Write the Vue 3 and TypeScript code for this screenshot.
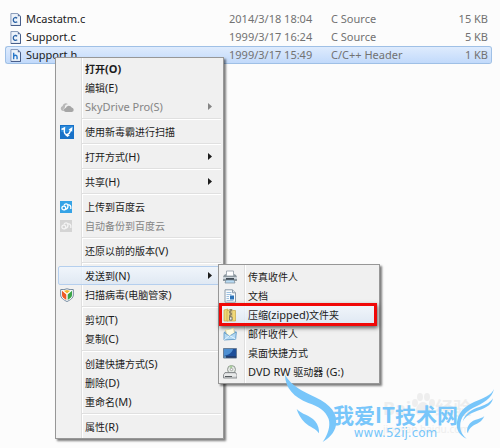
<script setup lang="ts">
interface FileRow {
  name: string
  date: string
  type: string
  size: string
  glyph: string
  selected?: boolean
}

interface MenuEntry {
  text: string
  icon?: string
  disabled?: boolean
  bold?: boolean
  arrow?: boolean
  open?: boolean
}

interface Run {
  text: string
  latin: boolean
}

const files: FileRow[] = [
  { name: 'Mcastatm.c', date: '2014/3/18 18:04', type: 'C Source', size: '15 KB', glyph: 'C' },
  { name: 'Support.c', date: '1999/3/17 16:24', type: 'C Source', size: '5 KB', glyph: 'C' },
  { name: 'Support.h', date: '1999/3/17 15:49', type: 'C/C++ Header', size: '1 KB', glyph: 'h', selected: true },
]

const groups: MenuEntry[][] = [
  [
    { text: '打开(O)', bold: true },
    { text: '编辑(E)' },
    { text: 'SkyDrive Pro(S)', icon: 'cloud', disabled: true, arrow: true },
  ],
  [{ text: '使用新毒霸进行扫描', icon: 'duba' }],
  [{ text: '打开方式(H)', arrow: true }],
  [{ text: '共享(H)', arrow: true }],
  [
    { text: '上传到百度云', icon: 'pan' },
    { text: '自动备份到百度云', icon: 'panoff', disabled: true },
  ],
  [{ text: '还原以前的版本(V)' }],
  [
    { text: '发送到(N)', arrow: true, open: true },
    { text: '扫描病毒(电脑管家)', icon: 'shield' },
  ],
  [{ text: '剪切(T)' }, { text: '复制(C)' }],
  [{ text: '创建快捷方式(S)' }, { text: '删除(D)' }, { text: '重命名(M)' }],
  [{ text: '属性(R)' }],
]

const sendTo: MenuEntry[] = [
  { text: '传真收件人', icon: 'fax' },
  { text: '文档', icon: 'doc' },
  { text: '压缩(zipped)文件夹', icon: 'zip', open: true },
  { text: '邮件收件人', icon: 'mail' },
  { text: '桌面快捷方式', icon: 'desktop' },
  { text: 'DVD RW 驱动器 (G:)', icon: 'dvd' },
]

// Latin runs are set one size up from the Chinese ones.
function runs(text: string): Run[] {
  return (text.match(/[\x20-\x7e]+|[^\x20-\x7e]+/g) ?? []).map((part) => ({
    text: part,
    latin: /^[\x20-\x7e]/.test(part),
  }))
}
</script>

<template>
  <main class="window">
    <table class="files">
      <tbody>
        <tr v-for="file in files" :key="file.name" :class="{ selected: file.selected }">
          <td class="name">
            <span class="file">
              <svg class="file-icon" viewBox="0 0 12 14" aria-hidden="true">
                <path d="M1 .5h7.500L11.500 3.500v10H1z" fill="#edf3fa" stroke="#7f93b4" />
                <path d="M11.500 3.500v10H1" fill="none" stroke="#3e5583" />
                <path d="M8.500.5v3h3z" fill="#5c719c" />
                <path v-if="file.glyph === 'C'" d="M7.800 5.600C5.800 4 3.600 5.200 3.600 7.500S5.800 11 7.900 9.500" fill="none" stroke="#2d64a6" stroke-width="1.500" />
                <path v-else d="M4 4v7M4 8C5 6.300 7.700 6.300 7.700 8.500V11" fill="none" stroke="#2978ca" stroke-width="1.500" />
              </svg>
              {{ file.name }}
            </span>
          </td>
          <td class="date">{{ file.date }}</td>
          <td class="type">{{ file.type }}</td>
          <td class="size">{{ file.size }}</td>
        </tr>
      </tbody>
    </table>

    <div class="menu context" role="menu">
      <div v-for="(group, g) in groups" :key="g" class="group" role="group">
        <div v-for="entry in group" :key="entry.text" class="slot">
          <button
            type="button"
            role="menuitem"
            class="item"
            :class="{ bold: entry.bold, active: entry.open }"
            :disabled="entry.disabled"
          >
            <span class="icon">
              <svg v-if="entry.icon === 'cloud'" viewBox="0 0 14 14" aria-hidden="true">
                <path d="M3 11a2.500 2.500 0 0 1-.4-4.900A3.200 3.200 0 0 1 8 4.200 3 3 0 0 0 5 7.500C3.500 8 3.200 10 4.200 11z" fill="#b8b8b8" />
                <path d="M6 12a2 2 0 0 1-.2-4A3.200 3.200 0 0 1 11.700 7.500a2.300 2.300 0 0 1 .3 4.500z" fill="#a6a6a6" />
              </svg>
              <svg v-else-if="entry.icon === 'duba'" viewBox="0 0 14 14" aria-hidden="true">
                <path d="M0 0h14v14H0z" fill="#1871c7" />
                <path d="M1 1h12v6H1z" fill="#2b8adb" />
                <path d="M1.500 4.500l3-1.500-.2 3.500C4.500 11 9.500 10.500 10.500 5" fill="none" stroke="#fff" stroke-width="1.400" />
                <path d="M8.500 4.500L12.500 2l-.5 4.500zM5 10l2.500 2L10 10z" fill="#fff" />
              </svg>
              <svg v-else-if="entry.icon === 'pan' || entry.icon === 'panoff'" viewBox="0 0 14 14" aria-hidden="true">
                <path d="M0 1h12v12H0z" :fill="entry.icon === 'pan' ? '#35a3e6' : '#d4d4d4'" />
                <g fill="none" :stroke="entry.icon === 'pan' ? '#fff' : '#f4f4f4'" stroke-width="1.300">
                  <circle cx="3.800" cy="8" r="1.900" />
                  <path d="M4 5.500C5 3 8 3.500 8 6S7 9 5.500 9.300M8 5c2-.5 3.200 1 2.800 4" />
                </g>
              </svg>
              <svg v-else-if="entry.icon === 'shield'" viewBox="0 0 14 14" aria-hidden="true">
                <path d="M.7 1.500Q4 2 7 .8q3 1.200 6.300.7V7c0 3-3 5-6.300 6.500C3.700 12 .7 10 .7 7z" fill="#fff" stroke="#71889e" />
                <path d="M2 2.700L6.300 6.500V12C3.800 10.500 2 9 2 7z" fill="#ee5a26" />
                <path d="M12 2.700L7.700 6.500V12C10.200 10.500 12 9 12 7z" fill="#3aa448" />
                <path d="M3.800 2.700Q5.500 2.500 7 2q1.500.5 3.200.7L7 5.500z" fill="#f5b52a" />
              </svg>
            </span>
            <span class="label">
              <span v-for="(run, r) in runs(entry.text)" :key="r" :class="{ latin: run.latin }">{{ run.text }}</span>
            </span>
            <svg v-if="entry.arrow" class="arrow" viewBox="0 0 4 7" aria-hidden="true"><path d="M0 0l4 3.500L0 7z" fill="currentColor" /></svg>
          </button>

          <div v-if="entry.open" class="menu submenu" role="menu">
            <button
              v-for="target in sendTo"
              :key="target.text"
              type="button"
              role="menuitem"
              class="item"
              :class="{ active: target.open, marked: target.open }"
            >
              <span class="icon">
                <svg v-if="target.icon === 'fax'" viewBox="0 0 14 14" aria-hidden="true">
                  <path d="M3.500 1h7v5h-7z" fill="#fff" stroke="#8f9ba5" stroke-width=".8" />
                  <path d="M1 5l2-1v2h8V4l2 1 1 2v4H0V7z" fill="#8d989f" />
                  <path d="M0 7h14v2H0z" fill="#cdd5db" />
                  <path d="M3 8h8v2H3z" fill="#414c55" />
                  <path d="M3 10h8l1 3H2z" fill="#b9dcf5" stroke="#788692" stroke-width=".7" />
                </svg>
                <svg v-else-if="target.icon === 'doc'" viewBox="0 0 14 14" aria-hidden="true">
                  <path d="M2 .8h7.500l3 3v9.400H2z" fill="#f8fbfd" stroke="#8c9aa8" />
                  <path d="M9.500.8v3h3" fill="#d9e2ea" stroke="#8c9aa8" />
                  <path d="M3.500 3.500h5M3.500 5.500h5M3.500 7.500h2.500M3.500 9.500h2.500M3.500 11.500h7" stroke="#9dc0df" />
                  <path d="M7 6.500h4v4H7z" fill="#2b72b8" />
                </svg>
                <svg v-else-if="target.icon === 'zip'" viewBox="0 0 14 14" aria-hidden="true">
                  <path d="M1 2l4-1v12H1z" fill="#efd676" stroke="#c9a742" stroke-width=".7" />
                  <path d="M4 2.500h8.500v10.500H4z" fill="#f1d978" stroke="#c7a645" stroke-width=".7" />
                  <path d="M6 1h3.500v12H6z" fill="#c9b67b" />
                  <path d="M7 2h2M6 4h2M7 6h2M6 8h2" stroke="#5f5b50" />
                  <path d="M6.500 9h2.500v3H6.500z" fill="#eee" stroke="#66665e" stroke-width=".8" />
                </svg>
                <svg v-else-if="target.icon === 'mail'" viewBox="0 0 14 14" aria-hidden="true">
                  <path d="M1 5L7.500.8 13.500 5 12.500 12 1 13z" fill="#7db4df" />
                  <path d="M2.500 3l8-1.500L12 8l-8 1z" fill="#fffbe2" stroke="#e2cb84" stroke-width=".7" />
                  <path d="M1 5.500L6.500 9l6.800-4-.6 7.300L1 13z" fill="#b3d9f3" stroke="#5c94c2" stroke-width=".8" />
                  <path d="M1.300 12.700L6.500 8.500l6 3.500" fill="none" stroke="#e6f5ff" />
                </svg>
                <svg v-else-if="target.icon === 'desktop'" viewBox="0 0 14 14" aria-hidden="true">
                  <path d="M.5 2.500h13v9.500H.5z" fill="#1e4f99" stroke="#687d96" />
                  <path d="M1 3h9C9 7 5 9 1 10z" fill="#4d8fd2" />
                  <path d="M1 10.500h12v1H1z" fill="#22314b" />
                  <path d="M1 10.500h2v1H1z" fill="#8bd0f0" />
                </svg>
                <svg v-else viewBox="0 0 14 14" aria-hidden="true">
                  <circle cx="8.500" cy="4.500" r="4" fill="#e3e8e3" stroke="#8e9690" />
                  <path d="M8.500 4.500L6 1.200A4 4 0 0 1 9.500.6z" fill="#a9ce9c" />
                  <circle cx="8.500" cy="4.500" r="1.200" fill="#fff" stroke="#888" stroke-width=".7" />
                  <path d="M2 7.500h10.500L14 10v3H.5v-3z" fill="#d8dadb" stroke="#777b7e" stroke-width=".8" />
                  <path d="M1 10h12.500" stroke="#fff" stroke-width=".8" />
                  <path d="M2 11.500h7" stroke="#575b5e" />
                </svg>
              </span>
              <span class="label">
                <span v-for="(run, r) in runs(target.text)" :key="r" :class="{ latin: run.latin }">{{ run.text }}</span>
              </span>
            </button>
          </div>
        </div>
      </div>
    </div>

    <aside class="watermark">
      <div class="baidu">
        <span class="baidu-name">Bai<svg viewBox="0 0 24 22" aria-hidden="true">
          <g fill="currentColor"><ellipse cx="4" cy="10" rx="3" ry="4" /><ellipse cx="9" cy="4" rx="3" ry="4" /><ellipse cx="16" cy="4" rx="3" ry="4" /><ellipse cx="21" cy="10" rx="3" ry="4" /><path d="M12 9c4 0 8 6 7 10s-4 2-7 2-6 2-7-2 3-10 7-10z" /></g>
        </svg>经验</span>
        <span class="baidu-host">jingyan.baidu.com</span>
      </div>
      <svg class="wings" viewBox="0 0 690 234" aria-hidden="true">
        <g fill="#78c6fa">
          <path d="M45 15C64 48 98 63 136 82C182 104 204 130 198 166C193 190 176 206 158 216C174 194 182 168 176 147C166 120 145 110 115 99C72 82 46 55 45 15Z" />
          <path d="M80 117C95 133 120 136 135 153C145 165 148 178 147 190C138 175 120 172 105 158C92 146 84 130 80 117Z" />
          <path d="M672 57C665 87 640 99 610 113C580 128 566 150 572 180C575 192 582 200 590 206C565 195 556 175 562 150C568 120 595 103 625 91C650 81 665 72 672 57Z" />
          <path d="M669 85C665 108 640 117 615 125C595 132 582 144 578 156C583 130 605 118 630 110C650 104 660 97 669 85Z" />
          <path d="M643 138C635 158 620 160 608 168C598 175 596 182 592 190C588 170 600 156 615 150C630 146 638 143 643 138Z" />
        </g>
      </svg>
      <div class="brand">
        <strong>我爱IT技术网</strong>
        <a href="http://www.52ij.com">www.52ij.com</a>
      </div>
    </aside>
  </main>
</template>

<style>
body {
  margin: 0;
  background: #fcfcfc;
}
</style>

<style scoped>
.window {
  position: relative;
  box-sizing: border-box;
  min-height: 100vh;
  padding: 10px 8px 0 5px;
  overflow: hidden;
  font-family: "Noto Sans", "Noto Sans CJK SC", sans-serif;
  font-size: 11px;
  color: #1c1c1c;
}

.files {
  width: 100%;
  table-layout: fixed;
  border-collapse: separate;
  border-spacing: 0;
}

.files td {
  height: 16px;
  padding: 0;
  border: solid transparent;
  border-width: 1px 0;
  line-height: 16px;
  white-space: nowrap;
  color: #727272;
}

.files .name {
  width: 223px;
  border-left-width: 1px;
  color: #222;
}

.files .date {
  width: 102px;
}

.files .size {
  width: 60px;
  padding-right: 3px;
  border-right-width: 1px;
  text-align: right;
}

.files .selected td {
  border-color: #9fc0e6;
  background: linear-gradient(#deebfd, #c2dafb) padding-box;
}

.files .selected .name {
  border-radius: 3px 0 0 3px;
}

.files .selected .size {
  border-radius: 0 3px 3px 0;
}

.file {
  display: flex;
  align-items: center;
  gap: 5px;
  padding-left: 4px;
}

.file-icon {
  width: 11px;
  height: 13px;
}

.menu {
  position: absolute;
  box-sizing: border-box;
  border: 1px solid #979797;
  background: linear-gradient(90deg, #f1f1f1 25px, #dfdfdf 25px, #dfdfdf 26px, #fff 26px, #fff 27px, #f0f0f0 27px);
  box-shadow: 2px 2px 2px rgba(0, 0, 0, 0.5);
}

.context {
  top: 57px;
  left: 55px;
  width: 169px;
  padding: 1px 2px 2px;
}

.submenu {
  top: -2px;
  left: 160px;
  z-index: 1;
  width: 162px;
  padding: 2px;
}

.group + .group::before {
  content: "";
  display: block;
  height: 1px;
  margin: 2px 0 2px 24px;
  border-top: 1px solid #e0e0e0;
  background: #fff;
}

.slot {
  position: relative;
}

.item {
  display: flex;
  align-items: center;
  box-sizing: border-box;
  width: 100%;
  height: 19px;
  margin: 0;
  padding: 0 8px 0 1px;
  border: 1px solid transparent;
  border-radius: 2px;
  background: none;
  font-family: inherit;
  font-size: 10px;
  line-height: 16px;
  text-align: left;
  white-space: nowrap;
  color: #1c1c1c;
}

.item:disabled {
  color: #858585;
}

.item.bold {
  font-weight: 700;
}

.item.active {
  border-color: #b5cfee;
  background: linear-gradient(rgba(240, 246, 253, 0.8), rgba(220, 231, 244, 0.8));
}

.item.marked {
  width: calc(100% - 2px);
  border-radius: 0;
  outline: 3px solid #f00808;
  outline-offset: -1px;
  box-shadow: 1px 2px 4px 2px rgba(0, 0, 0, 0.6);
}

.icon {
  display: flex;
  flex: none;
  width: 25px;
}

.icon svg {
  width: 14px;
  height: 14px;
}

.label {
  flex: 1;
  white-space: pre;
}

.latin {
  font-size: 11px;
}

.arrow {
  width: 4px;
  height: 7px;
}

.watermark {
  position: absolute;
  right: 0;
  bottom: 0;
  z-index: 2;
  width: 230px;
  height: 78px;
}

.wings {
  position: absolute;
  inset: 0;
  width: 100%;
  height: 100%;
}

.brand {
  position: absolute;
  top: 32px;
  left: 63px;
  display: flex;
  flex-direction: column;
  align-items: center;
  color: #78c6fa;
}

.brand strong {
  font-family: "Noto Sans CJK SC", sans-serif;
  font-size: 21px;
  font-weight: 700;
  line-height: 24px;
  white-space: nowrap;
}

.brand a {
  font-family: "DejaVu Sans", sans-serif;
  font-size: 12px;
  line-height: 14px;
  color: inherit;
  text-decoration: none;
}

.baidu {
  position: absolute;
  top: 23px;
  left: 113px;
  display: flex;
  flex-direction: column;
  color: #eee;
}

.baidu-name {
  display: flex;
  align-items: flex-end;
  font-size: 18px;
  font-weight: 700;
  line-height: 30px;
}

.baidu-name svg {
  align-self: flex-start;
  width: 24px;
  height: 22px;
}

.baidu-host {
  font-size: 10px;
  line-height: 12px;
}
</style>
